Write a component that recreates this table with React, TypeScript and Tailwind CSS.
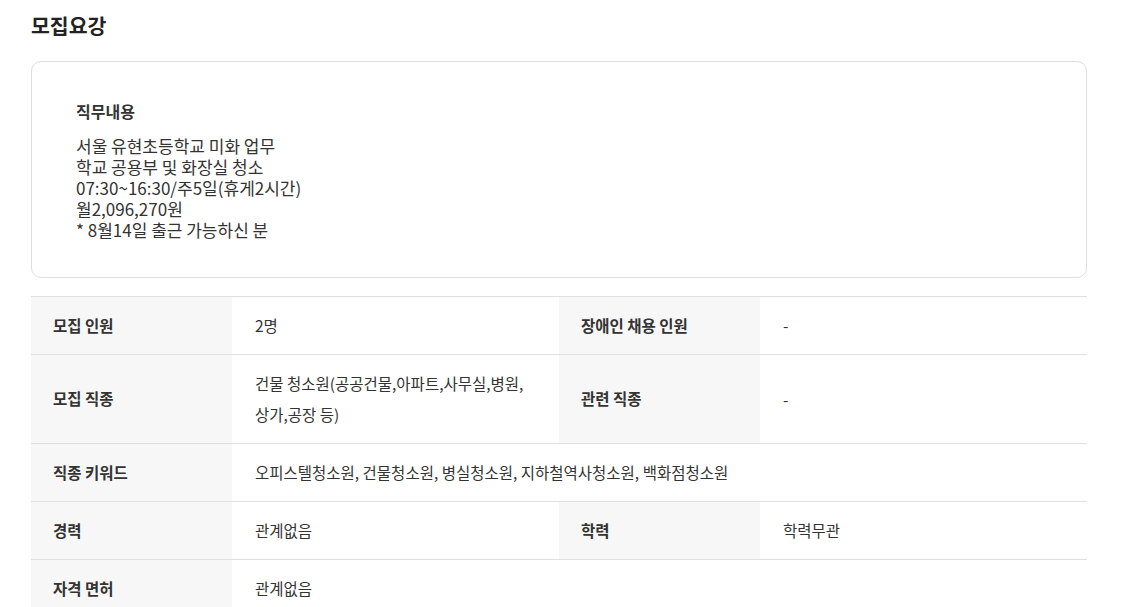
const font = { fontFamily: '"Noto Sans CJK KR", "Noto Sans", sans-serif' };

interface Cell {
  label: string;
  value: string[];
}

interface Row {
  cells: Cell[];
}

const rows: Row[] = [
  {
    cells: [
      { label: "모집 인원", value: ["2명"] },
      { label: "장애인 채용 인원", value: ["-"] },
    ],
  },
  {
    cells: [
      { label: "모집 직종", value: ["건물 청소원(공공건물,아파트,사무실,병원,", "상가,공장 등)"] },
      { label: "관련 직종", value: ["-"] },
    ],
  },
  {
    cells: [
      { label: "직종 키워드", value: ["오피스텔청소원, 건물청소원, 병실청소원, 지하철역사청소원, 백화점청소원"] },
    ],
  },
  {
    cells: [
      { label: "경력", value: ["관계없음"] },
      { label: "학력", value: ["학력무관"] },
    ],
  },
  {
    cells: [{ label: "자격 면허", value: ["관계없음"] }],
  },
];

const jobLines = [
  "서울 유현초등학교 미화 업무",
  "학교 공용부 및 화장실 청소",
  "07:30~16:30/주5일(휴게2시간)",
  "월2,096,270원",
  "* 8월14일 출근 가능하신 분",
];

export default function App() {
  return (
    <div className="min-h-screen bg-white text-[#333]" style={font}>
      <div className="w-[1056px] ml-[31px] pt-[11px]">
        <h2 className="text-[20.5px] leading-[28px] font-bold text-[#222]">모집요강</h2>

        {/* 직무내용 card */}
        <div className="mt-[22px] border border-[#dedede] rounded-[10px] pl-[44px] pt-[39px] pb-[37px]">
          <p className="text-[16px] leading-[20px] font-bold">직무내용</p>
          <div className="mt-[14px] text-[17px] leading-[21px] text-[#333]">
            {jobLines.map((line, i) => (
              <p key={i}>{line}</p>
            ))}
          </div>
        </div>

        {/* info table */}
        <div className="mt-[18px] border-t border-[#e0e0e0]">
          {rows.map((row, i) => (
            <div key={i} className="flex border-b border-[#e0e0e0]">
              {row.cells.map((cell, j) => (
                <div
                  key={j}
                  className={`flex ${row.cells.length === 1 ? "w-full" : "w-1/2"}`}
                >
                  <div className="w-[201px] shrink-0 bg-[#f7f7f7] px-[22px] flex items-center text-[15.5px] font-bold">
                    {cell.label}
                  </div>
                  <div className="flex-1 px-[23px] py-[13px] flex flex-col justify-center text-[15.5px] leading-[31px] text-[#333]">
                    {cell.value.map((v, k) => (
                      <p key={k}>{v}</p>
                    ))}
                  </div>
                </div>
              ))}
            </div>
          ))}
        </div>
      </div>
    </div>
  );
}
